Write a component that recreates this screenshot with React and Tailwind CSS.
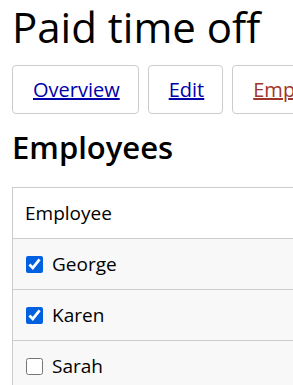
import React from "react";

export default function App() {
  const rows = [
    { name: "George", checked: true },
    { name: "Karen", checked: true },
    { name: "Sarah", checked: false },
  ];
  return (
    <div className="bg-white min-h-screen overflow-hidden px-3 text-black" style={{ fontFamily: '"Open Sans", "Noto Sans", sans-serif' }}>
      <h1 className="text-[42px] leading-[48px] pt-[3px] m-0 whitespace-nowrap">Paid time off</h1>
      <div className="flex gap-[9px] mt-[14px] whitespace-nowrap">
        <div className="border border-[#cccccc] rounded-[4px] h-[49px] pl-[20px] pr-[18px] flex items-center shrink-0">
          <a href="#" className="text-[20px] text-[#0000aa] underline">Overview</a>
        </div>
        <div className="border border-[#cccccc] rounded-[4px] h-[49px] pl-[20px] pr-[18px] flex items-center shrink-0">
          <a href="#" className="text-[20px] text-[#0000aa] underline">Edit</a>
        </div>
        <div className="border border-[#cccccc] rounded-[4px] h-[49px] pl-[20px] pr-[18px] flex items-center shrink-0">
          <a href="#" className="text-[20px] text-[#a0352a] underline">Employees</a>
        </div>
      </div>
      <h2 className="text-[31px] font-semibold leading-[40px] mt-[13px]">Employees</h2>
      <div className="mt-[20px] border-l border-t border-[#cccccc] w-[400px]">
        <div className="h-[51px] flex items-center px-3 text-[19px] border-b border-[#cccccc]">Employee</div>
        {rows.map((r) => (
          <div key={r.name} className="h-[51px] flex items-center pl-[13px] text-[19px] bg-[#f8f8f8] border-b border-[#cccccc] gap-[9px]">
            <input type="checkbox" defaultChecked={r.checked} className="w-[17px] h-[17px] accent-[#0060df]" />
            <span>{r.name}</span>
          </div>
        ))}
      </div>
    </div>
  );
}
